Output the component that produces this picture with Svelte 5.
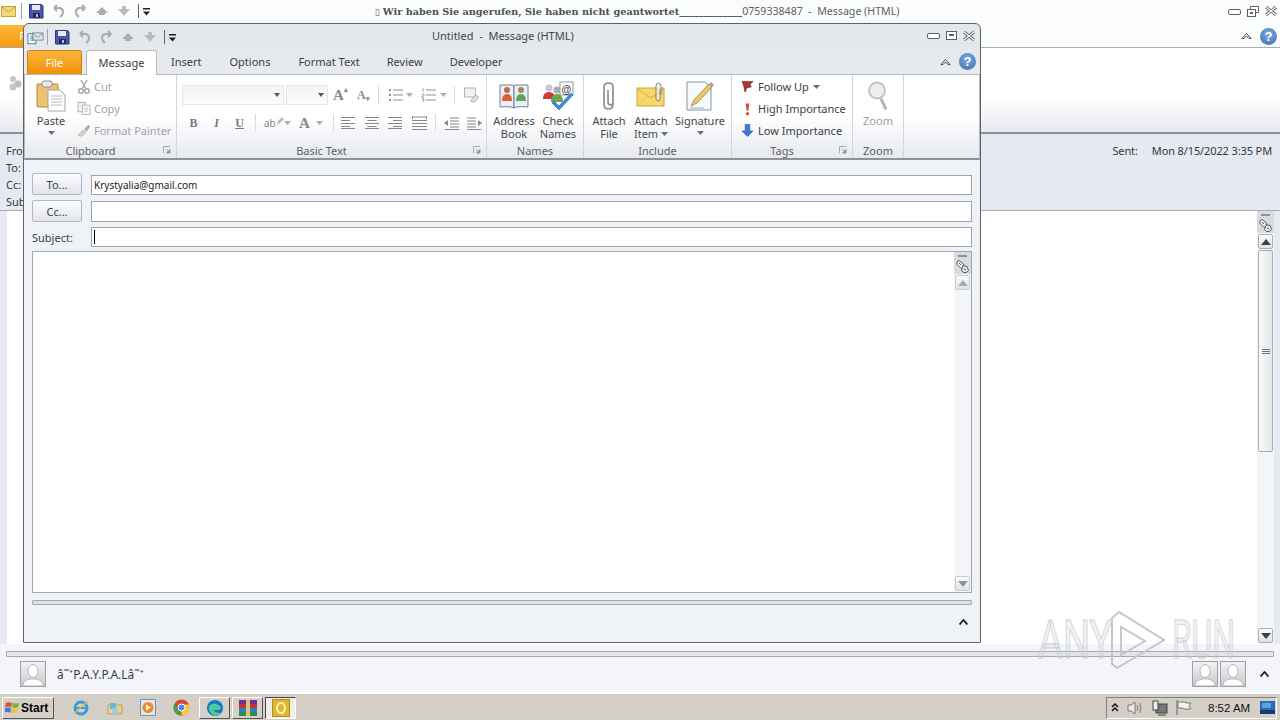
<script lang="ts">
	const headLabels = ['Fro', 'To:', 'Cc:', 'Sub'];
</script>

{#snippet caret()}
	<svg class="caret" width="7" height="4" viewBox="0 0 7 4"><path d="M0 0h7L3.5 4z" fill="#6b6f75" /></svg>
{/snippet}

{#snippet launcher()}
	<svg class="launcher" width="9" height="9" viewBox="0 0 9 9">
		<path d="M.5 7V.5H7" fill="none" stroke="#a5a9ae" />
		<path d="M3 3l3 3M7 3.5V7H3.5z" fill="#8d9197" stroke="#8d9197" stroke-width=".8" />
	</svg>
{/snippet}

{#snippet qat()}
	<svg class="qat" width="122" height="16" viewBox="0 0 122 16">
		<path d="M.5 1.500h12l1.500 1.500v12H.5z" fill="#4a57a8" stroke="#2c3577" />
		<rect x="3" y="2" width="8" height="5" fill="#e6e9f5" />
		<rect x="4" y="10" width="7" height="5" fill="#20285f" />
		<rect x="7" y="11" width="2" height="3" fill="#b6bddd" />
		<path d="M25 5h6q3 1 3 4t-3 5M25 5l3-3M25 5l3 3" fill="none" stroke="#a9adb3" stroke-width="2" />
		<path d="M56 5h-6q-3 1-3 4t3 5M56 5l-3-3M56 5l-3 3" fill="none" stroke="#a9adb3" stroke-width="2" />
		<path d="M67 10l6-6 6 6h-3v2h-6v-2z" fill="#a9adb3" />
		<path d="M89 6h4V3h4v3h4l-6 7z" fill="#b9bdc2" />
		<path d="M109.500 1v14" stroke="#5f6368" />
		<path d="M114 5h7v1.500h-7zM114 8.500h7l-3.500 4z" fill="#1d1f23" />
	</svg>
{/snippet}

{#snippet winBtns(restore)}
	<div class="winbtns">
		<svg width="13" height="7" viewBox="0 0 13 7"><rect x=".5" y="1.500" width="12" height="5" rx="1.500" fill="#fff" stroke="#5b6068" /></svg>
		{#if restore}
			<svg width="12" height="11" viewBox="0 0 12 11"><path d="M3.500 3V.5h8v6H9" fill="#fff" stroke="#5b6068" /><rect x=".5" y="3.500" width="8" height="7" fill="#fff" stroke="#5b6068" /><rect x="3" y="6" width="3" height="2" fill="#5b6068" /></svg>
		{:else}
			<svg width="11" height="9" viewBox="0 0 11 9"><rect x=".5" y=".5" width="10" height="8" fill="#fff" stroke="#5b6068" /><rect x="3" y="3" width="5" height="2" fill="#5b6068" /></svg>
		{/if}
		<svg width="12" height="10" viewBox="0 0 12 10"><path d="M1 1l10 8M11 1L1 9" stroke="#5b6068" stroke-width="3" /><path d="M1 1l10 8M11 1L1 9" stroke="#fff" stroke-width="1.200" /></svg>
	</div>
{/snippet}

{#snippet helpBtns()}
	<div class="helpbtns">
		<svg width="11" height="8" viewBox="0 0 11 8"><path d="M1 6.500L5.500 1.500l4.500 5H8L5.500 4 3 6.500z" fill="#fff" stroke="#3f4348" /></svg>
		<span class="help">?</span>
	</div>
{/snippet}

{#snippet avatar()}
	<div class="avatar">
		<svg width="24" height="24" viewBox="0 0 24 24">
			<ellipse cx="12" cy="9" rx="5" ry="6.500" fill="#fff" stroke="#b5b7ba" />
			<path d="M2 24c0-5 4-6 7-7h6c3 1 7 2 7 7z" fill="#fff" stroke="#b5b7ba" />
		</svg>
	</div>
{/snippet}

{#snippet paneScroll()}
	<div class="sb-head">
		<i class="sb-dash"></i>
		<svg width="13" height="13" viewBox="0 0 13 13">
			<path d="M1 1.500l2-1 5 4-1 3-2 1-4-4z" fill="#f7f7f8" stroke="#55595f" />
			<path d="M7 5.500l4 1 1.500 4-2 2h-3l-2-2z" fill="#e4e6e9" stroke="#55595f" />
			<path d="M3 3l2 2M8 9l2 1" stroke="#55595f" />
		</svg>
	</div>
{/snippet}

<div class="screen">
	<!-- message window behind the compose form -->
	<div class="reader">
		<div class="r-title">
			<svg class="mailicon" width="16" height="13" viewBox="0 0 16 13"><rect x=".5" y="1.500" width="14" height="10" fill="#f4d77c" stroke="#c9a13d" /><path d="M1 2l6.500 5L14 2" fill="none" stroke="#c9a13d" /></svg>
			<i class="r-sep"></i>
			{@render qat()}
			<div class="r-caption">
				<span class="tofu">▯</span>
				<b>Wir haben Sie angerufen, Sie haben nicht geantwortet_____________</b><span>0759338487 &nbsp;-&nbsp; Message (HTML)</span>
			</div>
			{@render winBtns(true)}
		</div>
		<div class="r-tabs">
			<span class="r-file">File</span>
			{@render helpBtns()}
		</div>
		<div class="r-ribbon">
			<svg class="r-people" width="15" height="16" viewBox="0 0 15 16"><circle cx="5" cy="4" r="3" fill="#c4c6c9" /><circle cx="10" cy="9" r="3.500" fill="#b8babd" /><circle cx="5" cy="12" r="3.500" fill="#c4c6c9" /></svg>
		</div>
		<div class="r-head">
			<div class="r-labels">
				{#each headLabels as label}<span>{label}</span>{/each}
			</div>
			<div class="r-sent"><span>Sent:</span><span>Mon 8/15/2022 3:35 PM</span></div>
		</div>
		<div class="r-body">
			<div class="r-page"></div>
			<div class="r-scroll">
				{@render paneScroll()}
				<button class="sb-btn" aria-label="up"><svg width="10" height="6" viewBox="0 0 10 6"><path d="M0 6l5-6 5 6z" fill="#3c4046" /></svg></button>
				<div class="sb-thumb"><i></i><i></i><i></i></div>
				<div class="sb-track"></div>
				<button class="sb-btn" aria-label="down"><svg width="10" height="6" viewBox="0 0 10 6"><path d="M0 0l5 6 5-6z" fill="#3c4046" /></svg></button>
			</div>
		</div>
		<div class="r-people-pane">
			<div class="r-split"></div>
			<div class="r-contact">
				{@render avatar()}
				<span class="r-name">â˜⁺P.A.Y.P.A.Lâ˜⁺</span>
				<div class="r-avatars">
					{@render avatar()}
					{@render avatar()}
				</div>
				<svg class="chev" width="9" height="6" viewBox="0 0 9 6"><path d="M.5 5.500l4-4.500 4 4.500" fill="none" stroke="#1d2024" stroke-width="1.800" /></svg>
			</div>
		</div>
		<div class="taskbar">
			<button class="start">
				<svg width="15" height="15" viewBox="0 0 17 16"><path d="M1 3q3-2 7 0l-1 5q-4-2-7 0z" fill="#e2562c" /><path d="M9 3q3 1 7 0l-1 5q-4 1-7 0z" fill="#7cb342" /><path d="M0 9q3-2 7 0l-1 5q-4-2-7 0z" fill="#3d7fd6" /><path d="M8 9q3 1 7 0l-1 5q-4 1-7 0z" fill="#f3c233" /></svg>
				Start
			</button>
			<div class="tb-icons">
				<svg width="18" height="18" viewBox="0 0 18 18"><circle cx="9" cy="9" r="6" fill="none" stroke="#3b9bdc" stroke-width="3" /><path d="M4 9h10" stroke="#3b9bdc" stroke-width="2" /><path d="M2 15Q9 8 16 2" fill="none" stroke="#e6b93c" stroke-width="1.500" /></svg>
				<svg width="16" height="16" viewBox="0 0 16 16"><path d="M1 5h14v9H1z" fill="#e8d58e" stroke="#b89f4f" /><path d="M3 3h6v6H3z" fill="#6fb5d9" /><rect x="5" y="8" width="6" height="6" fill="#9fcbe0" /></svg>
				<svg width="16" height="17" viewBox="0 0 16 17"><rect x=".5" y=".5" width="15" height="16" fill="#dfe8f0" stroke="#6a95b9" /><circle cx="8" cy="8.500" r="5.500" fill="#ee8a25" /><path d="M6 5.500l5 3-5 3z" fill="#fff" /></svg>
				<svg width="17" height="17" viewBox="0 0 17 17"><circle cx="8.500" cy="8.500" r="8" fill="#db4437" /><path d="M8.500 16.500a8 8 0 0 1-7-12l3.500 6z" fill="#3aa757" /><path d="M8.500 16.500a8 8 0 0 0 7.500-11H8.500z" fill="#fcc934" /><circle cx="8.500" cy="8.500" r="3.500" fill="#4285f4" stroke="#fff" /></svg>
			</div>
			<div class="tb-running">
				<div class="tb-btn"><svg width="18" height="18" viewBox="0 0 18 18"><circle cx="9" cy="9" r="8" fill="#1478c8" /><path d="M3 7q5-5 11 0 2 3-1 4H8q0 3 7 3-4 4-8 2-5-3-4-9z" fill="#4fc8a0" /></svg></div>
				<div class="tb-btn"><svg width="18" height="18" viewBox="0 0 18 18"><rect width="18" height="5" y="1" fill="#7a2e8f" /><rect width="18" height="4" y="5" fill="#c53030" /><rect width="18" height="4" y="9" fill="#2d7fbf" /><rect width="18" height="4" y="13" fill="#2f8f45" /><rect x="7" y="1" width="4" height="16" fill="#d9c27a" /></svg></div>
				<div class="tb-btn active"><svg width="18" height="18" viewBox="0 0 18 18"><rect x=".5" y=".5" width="17" height="17" fill="#e0b52f" stroke="#b58e1d" /><ellipse cx="9" cy="9" rx="4" ry="5" fill="none" stroke="#fff3c4" stroke-width="2" /></svg></div>
			</div>
			<div class="tray">
				<svg width="8" height="9" viewBox="0 0 8 9"><path d="M1 4l3-3 3 3M1 8l3-3 3 3" fill="none" stroke="#111" stroke-width="1.500" /></svg>
				<svg width="17" height="14" viewBox="0 0 17 14"><path d="M1 4h3l4-3v12l-4-3H1z" fill="#e8e8e8" stroke="#777" /><path d="M10 4q2 3 0 6M12.500 2q3 5 0 10" fill="none" stroke="#777" /></svg>
				<svg width="16" height="16" viewBox="0 0 16 16"><rect x="4" y="4" width="11" height="9" fill="#777" stroke="#444" /><rect x="1" y="1" width="5" height="9" fill="#eee" stroke="#444" /><path d="M6 15h8" stroke="#444" /></svg>
				<svg width="16" height="15" viewBox="0 0 16 15"><path d="M1 0v15" stroke="#666" /><path d="M2 2h7l1 1h5l-2 3 2 3H8L7 8H2z" fill="#f2f2f2" stroke="#777" /></svg>
				<span class="clock">8:52 AM</span>
				<svg class="netmon" width="15" height="13" viewBox="0 0 15 13"><rect width="15" height="13" fill="#2b6db0" /><rect y="9" width="15" height="4" fill="#123f73" /><rect x="2" y="2" width="9" height="5" fill="#5ba3dc" /></svg>
			</div>
		</div>
	</div>

	<!-- compose window -->
	<div class="compose">
		<div class="c-title">
			<svg class="c-app" width="17" height="16" viewBox="0 0 19 17"><rect x="1" y="5" width="9" height="11" fill="#fff" stroke="#4d6a85" /><path d="M6 4h12v8H6z" fill="#dfe7ef" stroke="#77838f" /><path d="M6 4l6 5 6-5" fill="none" stroke="#77838f" /><path d="M3 8h5M3 10h5M3 12h5" stroke="#6b9ac4" /></svg>
			<i class="r-sep"></i>
			{@render qat()}
			<div class="c-caption">Untitled &nbsp;-&nbsp; Message (HTML)</div>
			{@render winBtns(false)}
		</div>
		<div class="c-tabs">
			<span class="file-tab">File</span>
			<span class="tab on">Message</span>
			<span class="tab t-insert">Insert</span>
			<span class="tab t-options">Options</span>
			<span class="tab t-format">Format Text</span>
			<span class="tab t-review">Review</span>
			<span class="tab t-dev">Developer</span>
			{@render helpBtns()}
		</div>

		<div class="ribbon">
			<section class="grp g-clip">
				<div class="g-body">
					<div class="big paste">
						<svg width="32" height="32" viewBox="0 0 32 32">
							<path d="M2 4h20q1 0 1 1v21q0 1-1 1H3q-1 0-1-1z" fill="#eec271" stroke="#b8892f" />
							<rect x="7" y="1" width="10" height="6" rx="2" fill="#e9ebee" stroke="#8b8f95" />
							<path d="M13 10h12l5 5v16H13z" fill="#fff" stroke="#a0a5ab" />
							<path d="M16 16h11M16 19h11M16 22h11M16 25h11" stroke="#b4b8bd" />
						</svg>
						<span>Paste</span>
						{@render caret()}
					</div>
					<div class="stack">
						<div class="sm off">
							<svg width="14" height="15" viewBox="0 0 14 15"><path d="M4 1l5 9M10 1L5 10" stroke="#a5a8ad" stroke-width="1.500" /><circle cx="4" cy="12" r="2.300" fill="none" stroke="#a5a8ad" stroke-width="1.500" /><circle cx="10" cy="12" r="2.300" fill="none" stroke="#a5a8ad" stroke-width="1.500" /></svg>
							Cut
						</div>
						<div class="sm off">
							<svg width="14" height="15" viewBox="0 0 15 15"><rect x="1" y="1" width="8" height="10" fill="#eef0f2" stroke="#b0b3b8" /><rect x="6" y="4" width="8" height="10" fill="#fff" stroke="#b0b3b8" /><path d="M8 7h4M8 9h4M8 11h4" stroke="#c0c3c7" /></svg>
							Copy
						</div>
						<div class="sm off">
							<svg width="14" height="15" viewBox="0 0 16 15"><path d="M1 13l6-6 3 3-5 4z" fill="#d9d4c2" stroke="#b9b6aa" /><path d="M8 6l5-5 2 2-4 6z" fill="#a9adb3" /></svg>
							Format Painter
						</div>
					</div>
				</div>
				<footer class="has-launcher">Clipboard {@render launcher()}</footer>
			</section>

			<section class="grp g-text">
				<div class="g-body col">
					<div class="tr tr1">
						<div class="combo c-font"><i></i></div>
						<div class="combo c-size"><i></i></div>
						<span class="aa big-a">A<sup>▴</sup></span>
						<span class="aa small-a">A<sup>▾</sup></span>
						<i class="vsep s1"></i>
						<svg class="ic" width="15" height="14" viewBox="0 0 15 14"><path d="M5 2h10M5 7h10M5 12h10" stroke="#8a8d92" /><path d="M1 1h2v2H1zM1 6h2v2H1zM1 11h2v2H1z" fill="#8a8d92" /></svg>
						{@render caret()}
						<svg class="ic ml" width="15" height="14" viewBox="0 0 15 14"><path d="M5 2h10M5 7h10M5 12h10" stroke="#8a8d92" /><path d="M2 0v4M1 6h2v2H1v2h2M1 11h2v2H1" fill="none" stroke="#8a8d92" stroke-width=".8" /></svg>
						{@render caret()}
						<i class="vsep s2"></i>
						<svg class="ic" width="17" height="16" viewBox="0 0 16 16"><rect x="1" y="1" width="11" height="9" fill="#f0f1f3" stroke="#b1b4b8" /><path d="M7 14l5-6 3 2-4 5z" fill="#e4e5e7" stroke="#a5a8ad" /></svg>
					</div>
					<div class="tr tr2">
						<b class="fmt">B</b><i class="fmt it">I</i><u class="fmt un">U</u>
						<i class="vsep s3"></i>
						<span class="hl">ab<svg width="8" height="10" viewBox="0 0 8 10"><path d="M1 9l1-4 4-4 2 2-4 4z" fill="#b9bbbf" /></svg></span>
						{@render caret()}
						<b class="fcolor">A</b>
						{@render caret()}
						<i class="vsep s4"></i>
						<div class="aligns">
							<svg width="14" height="12" viewBox="0 0 14 12"><path d="M0 .5h14M0 3.500h9M0 6.500h14M0 9.500h9M0 11.500h14" stroke="#85888d" /></svg>
							<svg width="14" height="12" viewBox="0 0 14 12"><path d="M0 .5h14M2.500 3.500h9M0 6.500h14M2.500 9.500h9M0 11.500h14" stroke="#85888d" /></svg>
							<svg width="14" height="12" viewBox="0 0 14 12"><path d="M0 .5h14M5 3.500h9M0 6.500h14M5 9.500h9M0 11.500h14" stroke="#85888d" /></svg>
							<svg width="15" height="14" viewBox="0 0 15 14"><path d="M0 1h15M0 4.500h15M0 7.500h15M0 10.500h15M0 13.500h15" stroke="#85888d" /><path d="M.5 0v3M14.500 0v3" stroke="#85888d" /></svg>
						</div>
						<i class="vsep s5"></i>
						<div class="indents">
							<svg width="15" height="13" viewBox="0 0 15 13"><path d="M6 1h9M6 4h9M6 7h9M6 10h9M1 12.500h14" stroke="#85888d" /><path d="M4 3L0 6l4 3z" fill="#85888d" /></svg>
							<svg width="15" height="13" viewBox="0 0 15 13"><path d="M0 1h9M0 4h9M0 7h9M0 10h9M0 12.500h14" stroke="#85888d" /><path d="M11 3l4 3-4 3z" fill="#85888d" /></svg>
						</div>
					</div>
				</div>
				<footer class="has-launcher">Basic Text {@render launcher()}</footer>
			</section>

			<section class="grp g-names">
				<div class="g-body">
					<div class="big w44">
						<svg width="30" height="28" viewBox="0 0 30 28">
							<path d="M1 3h13q1 0 1 2v21q-3-2-14-1z" fill="#eaf0f7" stroke="#6e7f93" />
							<path d="M29 3H16q-1 0-1 2v21q3-2 14-1z" fill="#eaf0f7" stroke="#6e7f93" />
							<circle cx="8" cy="8" r="3" fill="#b4713b" /><path d="M3 19q0-7 5-7t5 7z" fill="#d9603b" />
							<circle cx="22" cy="8" r="3" fill="#a9884f" /><path d="M17 19q0-7 5-7t5 7z" fill="#5ba65a" />
						</svg>
						<span>Address<br />Book</span>
					</div>
					<div class="big w44">
						<svg width="32" height="30" viewBox="0 0 32 30">
							<circle cx="7" cy="7" r="3.500" fill="#c6c9cd" /><path d="M1 18q0-7 6-7t6 7z" fill="#d03a34" />
							<circle cx="15" cy="9" r="3.500" fill="#a9aeb3" /><path d="M9 21q0-8 6-8t6 8z" fill="#6aa84f" />
							<rect x="18" y="1" width="13" height="13" fill="#fff" stroke="#8e98a3" />
							<text x="19.500" y="12" class="at">@</text>
							<path d="M12 20l5 5 12-13 2 2-14 15-7-7z" fill="#3f8fd4" stroke="#1f65a8" stroke-width=".6" />
						</svg>
						<span>Check<br />Names</span>
					</div>
				</div>
				<footer>Names</footer>
			</section>

			<section class="grp g-incl">
				<div class="g-body">
					<div class="big w42">
						<svg width="16" height="30" viewBox="0 0 16 30"><path d="M12 9v14q0 5-4.500 5T3 23V6q0-4 4.500-4T12 6v15q0 3-2.500 3T7 21V9" fill="none" stroke="#8a8f95" stroke-width="1.700" /></svg>
						<span>Attach<br />File</span>
					</div>
					<div class="big w42">
						<svg width="30" height="30" viewBox="0 0 30 30">
							<rect x="1" y="7" width="27" height="18" fill="#f7d869" stroke="#c8a540" />
							<path d="M1 8l14 9 13-9" fill="none" stroke="#d9a93a" />
							<path d="M2 24l9-9M27 24l-9-9" stroke="#e8c55a" />
							<path d="M24 8v9q0 3-2 3t-2-3V5q0-3 2.500-3T25 5v9" fill="#fff8" stroke="#7d8288" />
						</svg>
						<span>Attach<br />Item {@render caret()}</span>
					</div>
					<div class="big w56">
						<svg width="30" height="30" viewBox="0 0 30 30">
							<path d="M2 1h18l6 6v22H2z" fill="#f7fafc" stroke="#7f95ab" />
							<path d="M6 25l3-6L24 3l3 3L12 22z" fill="#eec75f" stroke="#9a7f3c" stroke-width=".8" />
							<path d="M24 3l3 3 2-2-3-3z" fill="#9ca1a7" />
							<path d="M5 27h14" stroke="#8fb2d2" />
						</svg>
						<span>Signature</span>
						{@render caret()}
					</div>
				</div>
				<footer>Include</footer>
			</section>

			<section class="grp g-tags">
				<div class="g-body">
					<div class="stack">
						<div class="sm tag">
							<svg width="13" height="13" viewBox="0 0 14 13"><path d="M1 1h12l-3 3 1 3-5 1-1 4H4L3 6z" fill="#a9382b" stroke="#6e2118" stroke-width=".6" /></svg>
							Follow Up {@render caret()}
						</div>
						<div class="sm tag">
							<svg width="13" height="14" viewBox="0 0 14 14"><path d="M5 1h4L8 9H6z" fill="#e04a3a" /><circle cx="7" cy="12" r="1.800" fill="#e04a3a" /></svg>
							High Importance
						</div>
						<div class="sm tag">
							<svg width="13" height="14" viewBox="0 0 14 14"><path d="M4.500 1h5v7H13l-6 6-6-6h3.500z" fill="#3d78d8" stroke="#254f9c" stroke-width=".6" /></svg>
							Low Importance
						</div>
					</div>
				</div>
				<footer class="has-launcher">Tags {@render launcher()}</footer>
			</section>

			<section class="grp g-zoom">
				<div class="g-body">
					<div class="big zoomb off">
						<svg width="22" height="31" viewBox="0 0 22 31"><circle cx="10" cy="10" r="8" fill="#eceeef" stroke="#c0c2c5" stroke-width="2" /><path d="M14 18l5 11" stroke="#b0b3b6" stroke-width="3" /></svg>
						<span>Zoom</span>
					</div>
				</div>
				<footer>Zoom</footer>
			</section>
		</div>

		<div class="form">
			<div class="f-row r-to">
				<button class="addr">To...</button>
				<div class="field">Krystyalia@gmail.com</div>
			</div>
			<div class="f-row r-cc">
				<button class="addr">Cc...</button>
				<div class="field"></div>
			</div>
			<div class="f-row r-subj">
				<span class="subj-label">Subject:</span>
				<div class="field"><i class="cursor"></i></div>
			</div>
			<div class="editor">
				<div class="ed-page"></div>
				<div class="ed-scroll">
					{@render paneScroll()}
					<button class="sb-btn light" aria-label="up"><svg width="10" height="6" viewBox="0 0 10 6"><path d="M0 6l5-6 5 6z" fill="#a9adb3" /></svg></button>
					<div class="sb-track"></div>
					<button class="sb-btn light" aria-label="down"><svg width="10" height="6" viewBox="0 0 10 6"><path d="M0 0l5 6 5-6z" fill="#8d8fa8" /></svg></button>
				</div>
			</div>
			<div class="f-split"></div>
			<div class="f-foot">
				<svg width="9" height="6" viewBox="0 0 9 6"><path d="M.5 5.500l4-4.500 4 4.500" fill="none" stroke="#1d2024" stroke-width="1.800" /></svg>
			</div>
		</div>
	</div>

	<!-- recording watermark -->
	<div class="mark">
		<span class="m-any">ANY</span>
		<svg width="56" height="60" viewBox="0 0 56 60"><path d="M2 8v46l5 4 47-28L9 2zM11 17v28l24-14z" fill="none" stroke="#c4c7cb" stroke-width="2" /></svg>
		<span class="m-run">RUN</span>
	</div>
</div>

<style>
	:global(body) {
		margin: 0;
		font-family: "Noto Sans", "Open Sans", sans-serif;
	}
	.screen {
		position: relative;
		width: 1280px;
		height: 720px;
		overflow: hidden;
		font-size: 11px;
		color: #34383d;
	}
	.screen svg {
		display: block;
		flex: none;
	}
	.reader {
		display: flex;
		flex-direction: column;
		height: 720px;
		background: #fff;
	}
	.r-title {
		height: 25px;
		display: flex;
		align-items: center;
		padding: 0 0 3px 1px;
		background: #fbfcfc;
		flex: none;
		box-sizing: border-box;
	}
	.mailicon {
		margin-right: 4px;
	}
	.r-sep {
		width: 1px;
		height: 16px;
		background: #9aa0a6;
		margin-right: 7px;
		flex: none;
	}
	.r-caption {
		flex: 1;
		margin-left: 224px;
		white-space: nowrap;
		color: #5d6167;
		font-size: 10.6px;
	}
	.r-caption b {
		font-family: "DejaVu Serif", "Liberation Serif", serif;
		font-size: 9.7px;
		color: #4c5055;
	}
	.tofu {
		font-size: 9px;
	}
	.winbtns {
		display: flex;
		align-items: center;
		gap: 6px;
		margin-right: 3px;
		flex: none;
	}
	.r-tabs {
		height: 22px;
		display: flex;
		align-items: center;
		justify-content: space-between;
		background: #fbfcfc;
		flex: none;
	}
	.r-file {
		width: 56px;
		height: 22px;
		background: linear-gradient(#ffb639, #f59c0c);
		color: #fff;
		text-align: center;
		line-height: 22px;
	}
	.helpbtns {
		display: flex;
		align-items: center;
		gap: 8px;
		margin-right: 3px;
	}
	.help {
		width: 17px;
		height: 17px;
		border-radius: 50%;
		background: radial-gradient(circle at 50% 35%, #7ea9de, #3a6db5);
		color: #fff;
		font: bold 13px/17px "Liberation Sans", sans-serif;
		text-align: center;
	}
	.r-ribbon {
		height: 87px;
		flex: none;
		border-top: 1px solid #a9adb2;
		border-bottom: 2px solid #8c9096;
		box-sizing: border-box;
		background: linear-gradient(#fff 0, #fff 60%, #e7e9ee 100%);
		padding: 27px 0 0 8px;
	}
	.r-head {
		height: 77px;
		flex: none;
		display: flex;
		justify-content: space-between;
		background: #e6e9f1;
		border-bottom: 1px solid #a9adb3;
		box-sizing: border-box;
		padding: 8px 8px 0 6px;
	}
	.r-labels {
		display: flex;
		flex-direction: column;
	}
	.r-labels span {
		height: 17px;
		line-height: 17px;
	}
	.r-sent {
		display: flex;
		gap: 14px;
		line-height: 17px;
		letter-spacing: -0.12px;
	}
	.r-body {
		flex: 1;
		display: flex;
		background: #e6e9f1;
		padding: 0 6px 0 7px;
		min-height: 0;
	}
	.r-page {
		flex: 1;
		background: #fff;
	}
	.r-scroll {
		width: 17px;
		display: flex;
		flex-direction: column;
		background: #f3f5f8;
	}
	.sb-head {
		height: 22px;
		display: flex;
		flex-direction: column;
		align-items: center;
		gap: 3px;
		background: #d9dbdf;
		padding-top: 3px;
		box-sizing: border-box;
		flex: none;
	}
	.sb-dash {
		width: 9px;
		height: 2px;
		background: #8e9297;
	}
	.sb-btn {
		width: 15px;
		height: 15px;
		padding: 0;
		margin: 1px;
		display: flex;
		align-items: center;
		justify-content: center;
		background: linear-gradient(#fbfcfd, #dfe2e7);
		border: 1px solid #a9adb3;
		border-radius: 2px;
		box-sizing: border-box;
		flex: none;
	}
	.sb-btn.light {
		border-color: #c9ccd0;
	}
	.sb-thumb {
		height: 202px;
		margin: 0 1px;
		flex: none;
		display: flex;
		flex-direction: column;
		justify-content: center;
		align-items: center;
		gap: 1px;
		background: linear-gradient(90deg, #fafbfc, #e4e6ea);
		border: 1px solid #a9adb3;
		border-radius: 2px;
		box-sizing: border-box;
	}
	.sb-thumb i {
		width: 8px;
		height: 1px;
		background: #6d7176;
	}
	.sb-track {
		flex: 1;
	}
	.r-people-pane {
		height: 48px;
		flex: none;
		background: #f3f5f8;
		padding-top: 7px;
		box-sizing: border-box;
	}
	.r-split {
		height: 6px;
		margin: 0 6px;
		background: #e3e5e9;
		border: 1px solid #a6aaaf;
		box-sizing: border-box;
		border-radius: 1px;
	}
	.r-contact {
		display: flex;
		align-items: center;
		padding: 4px 11px 0 20px;
	}
	.avatar {
		width: 26px;
		height: 26px;
		border: 1px solid #9da0a4;
		background: linear-gradient(#f2f2f3, #c7c9cb);
		box-sizing: border-box;
		overflow: hidden;
		flex: none;
	}
	.r-name {
		flex: 1;
		margin-left: 11px;
		font-size: 12px;
		color: #3a3d42;
	}
	.r-avatars {
		display: flex;
		gap: 2px;
		margin-right: 14px;
	}
	.taskbar {
		height: 28px;
		flex: none;
		display: flex;
		align-items: center;
		background: #d4d0c8;
		border-top: 2px solid #fff;
		box-sizing: border-box;
		padding: 1px 3px 0 2px;
	}
	.start {
		width: 52px;
		height: 22px;
		display: flex;
		align-items: center;
		gap: 1px;
		padding: 0 0 0 2px;
		background: #d4d0c8;
		border: 1px solid;
		border-color: #fff #555 #555 #fff;
		font: bold 12px "Liberation Sans", sans-serif;
		color: #000;
		box-sizing: border-box;
	}
	.tb-icons {
		display: flex;
		align-items: center;
		gap: 17px;
		margin-left: 18px;
	}
	.tb-running {
		display: flex;
		gap: 2px;
		margin-left: 9px;
		flex: 1;
	}
	.tb-btn {
		width: 31px;
		height: 22px;
		display: flex;
		align-items: center;
		justify-content: center;
		border: 1px solid;
		border-color: #fff #555 #555 #fff;
		box-sizing: border-box;
	}
	.tb-btn.active {
		border-color: #444 #fff #fff #444;
		background: #f1efe9;
	}
	.tray {
		width: 171px;
		height: 22px;
		display: flex;
		align-items: center;
		border: 1px solid;
		border-color: #808080 #fff #fff #808080;
		box-sizing: border-box;
		padding: 0 1px 0 4px;
		gap: 8px;
	}
	.clock {
		font: 11.5px "Liberation Sans", sans-serif;
		color: #111;
		margin-left: 8px;
		white-space: nowrap;
	}
	.netmon {
		margin-left: auto;
	}

	.compose {
		position: absolute;
		left: 23px;
		top: 23px;
		width: 958px;
		height: 620px;
		box-sizing: border-box;
		display: flex;
		flex-direction: column;
		border: 1px solid #5d6268;
		border-radius: 6px 6px 0 0;
		background: linear-gradient(#e3e7eb 0, #e7eaee 50px, #eff2f6 140px);
		overflow: hidden;
	}
	.c-title {
		height: 25px;
		flex: none;
		display: flex;
		align-items: center;
		padding-left: 2px;
	}
	.c-title .winbtns {
		margin: 0 5px 2px 0;
	}
	.c-app {
		margin: 0 3px 0 1px;
	}
	.c-caption {
		flex: 1;
		margin-left: 255px;
		padding-bottom: 2px;
		white-space: nowrap;
		color: #41454a;
	}
	.c-tabs {
		height: 25px;
		display: flex;
		align-items: flex-end;
		flex: none;
		padding-left: 3px;
	}
	.file-tab {
		width: 55px;
		height: 24px;
		border-radius: 3px 3px 0 0;
		background: linear-gradient(#fbb63e, #f09206);
		color: #fff;
		text-align: center;
		line-height: 23px;
		box-sizing: border-box;
		border: 1px solid #d2820c;
		border-bottom: 0;
	}
	.tab {
		height: 24px;
		line-height: 23px;
		color: #3b3f44;
		white-space: nowrap;
		flex: none;
	}
	.tab.on {
		width: 71px;
		margin-left: 4px;
		text-align: center;
		background: #fff;
		border: 1px solid #b6babf;
		border-bottom: 0;
		border-radius: 3px 3px 0 0;
		box-sizing: border-box;
		height: 25px;
		position: relative;
		top: 1px;
	}
	.t-insert { margin-left: 14px; }
	.t-options { margin-left: 28px; }
	.t-format { margin-left: 28px; }
	.t-review { margin-left: 27px; }
	.t-dev { margin-left: 27px; }
	.c-tabs .helpbtns {
		margin-left: auto;
		margin-right: 4px;
		align-self: center;
	}
	.ribbon {
		height: 86px;
		flex: none;
		display: flex;
		background: linear-gradient(#fff 0, #fff 50%, #e6e9ee 100%);
		border: 1px solid #b6babf;
		border-bottom: 2px solid #8d9298;
		box-sizing: border-box;
		color: #44484d;
	}
	.grp {
		flex: none;
		display: flex;
		flex-direction: column;
		border-right: 1px solid #d3d6da;
		box-sizing: border-box;
	}
	.g-clip { width: 152px; }
	.g-text { width: 310px; }
	.g-names { width: 97px; }
	.g-incl { width: 148px; }
	.g-tags { width: 121px; }
	.g-zoom { width: 51px; }
	.g-body {
		flex: 1;
		display: flex;
		min-height: 0;
	}
	.g-clip .g-body {
		padding-left: 2px;
	}
	.col {
		flex-direction: column;
		padding: 9px 0 0 5px;
	}
	.grp footer {
		height: 17px;
		flex: none;
		position: relative;
		text-align: center;
		line-height: 19px;
		color: #5c6065;
	}
	.grp footer.has-launcher {
		padding-right: 20px;
	}
	.launcher {
		position: absolute;
		right: 4px;
		top: 5px;
	}
	.big {
		display: flex;
		flex-direction: column;
		align-items: center;
		padding-top: 5px;
		line-height: 13px;
		text-align: center;
		white-space: nowrap;
		flex: none;
		box-sizing: border-box;
	}
	.big svg:first-child {
		height: 32px;
		margin-bottom: 2px;
	}
	.big > .caret {
		margin-top: 4px;
		height: 4px;
		margin-bottom: 0;
	}
	.big span .caret {
		display: inline-block;
		margin: 0 0 2px;
		vertical-align: middle;
	}
	.paste {
		width: 48px;
	}
	.stack {
		display: flex;
		flex-direction: column;
		padding-top: 1px;
	}
	.sm {
		height: 22px;
		display: flex;
		align-items: center;
		gap: 3px;
		white-space: nowrap;
	}
	.off,
	.off span {
		color: #a0a3a7;
	}
	.g-clip .stack {
		margin-left: 2px;
	}
	.tr {
		display: flex;
		align-items: center;
		flex: none;
	}
	.tr > * {
		flex: none;
	}
	.tr .caret {
		opacity: 0.55;
	}
	.tr1 {
		height: 22px;
	}
	.tr2 {
		height: 22px;
		margin-top: 6px;
	}
	.combo {
		height: 20px;
		background: linear-gradient(#f3f4f6, #fbfbfc);
		border: 1px solid #e3e5e8;
		box-sizing: border-box;
		position: relative;
		margin-right: 2px;
	}
	.combo i {
		position: absolute;
		right: 3px;
		top: 7px;
		border: 3px solid transparent;
		border-top: 4px solid #55595e;
	}
	.c-font { width: 102px; }
	.c-size { width: 42px; margin-right: 5px; }
	.aa {
		font: bold 15px "Liberation Serif", serif;
		color: #85888d;
		width: 24px;
		display: flex;
	}
	.small-a {
		font-size: 12px;
		width: 21px;
		align-items: flex-end;
	}
	.aa sup {
		font-size: 7px;
		line-height: 1;
	}
	.vsep {
		width: 1px;
		height: 18px;
		background: #d9dbdf;
	}
	.s1 { margin: 0 9px 0 0; }
	.s2 { margin: 0 8px 0 7px; }
	.s3 { margin: 0 8px 0 4px; }
	.s4 { margin: 0 7px 0 10px; }
	.s5 { margin: 0 8px 0 8px; }
	.tr1 .caret {
		margin-left: 3px;
	}
	.tr1 .ic.ml {
		margin-left: 8px;
	}
	.tr1 .ic.ml + :global(.caret) {
		margin-left: 4px;
	}
	.fmt {
		width: 23px;
		text-align: center;
		font: bold 12px "Liberation Serif", serif;
		color: #77797d;
	}
	.it {
		font-style: italic;
	}
	.hl {
		display: flex;
		font-size: 10px;
		color: #85888d;
		width: 18px;
	}
	.tr2 .caret {
		margin: 0 8px 0 2px;
	}
	.fcolor {
		font: bold 15px "Liberation Serif", serif;
		color: #85888d;
		width: 14px;
	}
	.fcolor + :global(.caret) {
		margin: 0 0 0 3px;
	}
	.aligns {
		display: flex;
		gap: 9.5px;
		align-items: center;
	}
	.indents {
		display: flex;
		gap: 8px;
	}
	.g-names .g-body { padding-left: 5px; }
	.w44 { width: 44px; }
	.w42 { width: 42px; }
	.w56 { width: 56px; }
	.g-incl .g-body { padding-left: 4px; }
	.at {
		font: bold 10px "Liberation Sans", sans-serif;
		fill: #3b4754;
	}
	.tag {
		gap: 4px;
		color: #3c4045;
	}
	.g-tags .stack {
		margin-left: 9px;
	}
	.zoomb {
		width: 50px;
	}
	.form {
		flex: 1;
		display: flex;
		flex-direction: column;
		padding: 0 8px;
		min-height: 0;
		background: #eff2f6;
	}
	.f-row {
		display: flex;
		align-items: flex-end;
		flex: none;
		height: 22px;
	}
	.r-to { margin-top: 13px; }
	.r-cc { margin-top: 5px; }
	.r-subj { margin-top: 5px; height: 20px; }
	.addr {
		width: 50px;
		height: 22px;
		padding: 0;
		margin-right: 9px;
		background: linear-gradient(#fbfcfd, #e2e5e9);
		border: 1px solid #b4b7bc;
		border-radius: 2px;
		font: inherit;
		color: #3c4045;
		flex: none;
	}
	.subj-label {
		width: 59px;
		color: #3c4045;
		flex: none;
		align-self: center;
	}
	.field {
		flex: 1;
		height: 21px;
		background: #fff;
		border: 1px solid #9fa3a9;
		box-sizing: border-box;
		padding-left: 2px;
		font-size: 10px;
		color: #1e2125;
		display: flex;
		align-items: center;
	}
	.r-to .field,
	.r-subj .field {
		height: 20px;
	}
	.cursor {
		width: 1px;
		height: 14px;
		background: #000;
	}
	.editor {
		height: 342px;
		margin-top: 4px;
		flex: none;
		display: flex;
		background: #fff;
		border: 1px solid #a4a8ad;
		box-sizing: border-box;
	}
	.ed-page {
		flex: 1;
	}
	.ed-scroll {
		width: 17px;
		display: flex;
		flex-direction: column;
		background: #f3f5f8;
	}
	.f-split {
		height: 5px;
		margin-top: 7px;
		background: #dfe2e6;
		border: 1px solid #a6aaaf;
		border-radius: 1px;
		box-sizing: border-box;
		flex: none;
	}
	.f-foot {
		flex: 1;
		display: flex;
		justify-content: flex-end;
		align-items: center;
		padding: 0 4px 3px 0;
	}
	.mark {
		position: absolute;
		left: 1038px;
		top: 610px;
		display: flex;
		align-items: center;
		pointer-events: none;
	}
	.mark span {
		font: 400 53px/1 "Roboto", sans-serif;
		color: rgba(205, 208, 212, 0.25);
		-webkit-text-stroke: 1px #cdd0d4;
		transform: scaleX(0.72);
		transform-origin: left center;
		white-space: nowrap;
	}
	.m-any { width: 72px; }
	.mark .m-run {
		width: 60px;
		margin-left: 6px;
		transform: scaleX(0.6);
	}
</style>
